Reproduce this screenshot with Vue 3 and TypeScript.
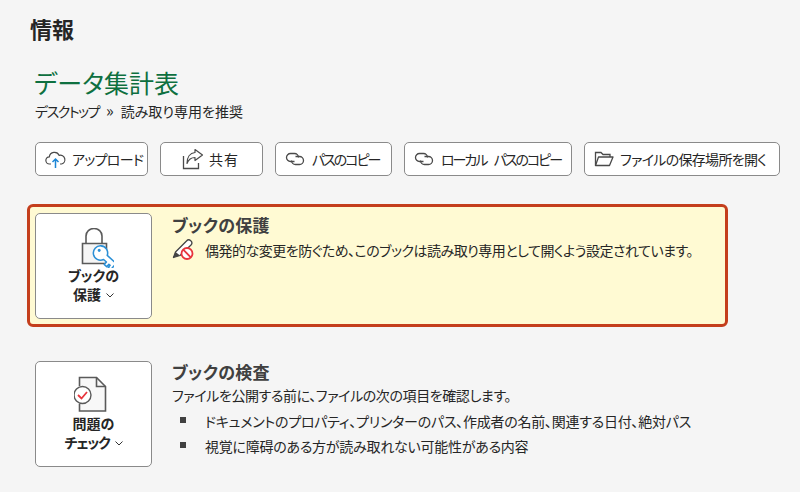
<script setup lang="ts">
interface Tool { label: string; icon: string; width: number }
const tools: Tool[] = [
  { label: 'アップロード', icon: 'cloud', width: 113 },
  { label: '共有', icon: 'share', width: 103 },
  { label: 'パスのコピー', icon: 'link', width: 117 },
  { label: 'ローカル パスのコピー', icon: 'link', width: 168 },
  { label: 'ファイルの保存場所を開く', icon: 'folder', width: 196 },
]
</script>

<template>
  <div class="page">
    <h1 class="heading">情報</h1>
    <div class="doc-title">データ集計表</div>
    <div class="crumb"><span class="crumb-kana">デスクトップ</span><span class="sep">»</span><span>読み取り専用を推奨</span></div>

    <div class="tools">
      <button v-for="t in tools" :key="t.label" class="tool" :class="'tool-' + t.icon" :style="{ width: t.width + 'px' }">
        <svg v-if="t.icon === 'cloud'" width="22" height="20" viewBox="0 0 22 20" fill="none">
          <path d="M6 15H4.600A3.600 3.600 0 0 1 4.300 7.800 5.200 5.200 0 0 1 14.200 6.400 4.400 4.400 0 0 1 16.600 15H15" stroke="#4a4a4a" stroke-width="1.200" />
          <path d="M10.500 19V10.500M7.500 13 10.500 10 13.500 13" stroke="#1c86d6" stroke-width="1.500" />
        </svg>
        <svg v-else-if="t.icon === 'share'" width="22" height="22" viewBox="0 0 22 22" fill="none">
          <path d="M1.500 8V20.500H16.500V15" stroke="#4a4a4a" stroke-width="1.300" />
          <path d="M13 1.500 20.500 7 13 12.500V9.500C9 9.500 6.500 11.500 5 15.500 5 9.500 8 5 13 4.500Z" stroke="#4a4a4a" stroke-width="1.200" stroke-linejoin="round" />
        </svg>
        <svg v-else-if="t.icon === 'link'" width="20" height="14" viewBox="0 0 20 14" fill="none">
          <path d="M9.500 9.500H5.500A4 4 0 0 1 5.500 1.500H9.500A4 4 0 0 1 13.500 5.500" stroke="#4a4a4a" stroke-width="1.300" />
          <path d="M10.500 4.500H14.500A4 4 0 0 1 14.500 12.500H10.500A4 4 0 0 1 6.500 8.500" stroke="#4a4a4a" stroke-width="1.300" />
        </svg>
        <svg v-else width="20" height="16" viewBox="0 0 20 16" fill="none">
          <path d="M1.500 14.500V1.500H7L9 3.500H16V6" stroke="#4a4a4a" stroke-width="1.300" />
          <path d="M1.500 14.500 4.500 6H19L15.500 14.500Z" stroke="#4a4a4a" stroke-width="1.300" stroke-linejoin="round" />
        </svg>
        <span>{{ t.label }}</span>
      </button>
    </div>

    <section class="banner">
      <button class="big-btn">
        <svg class="big-icon" width="40" height="40" viewBox="0 0 40 40" fill="none">
          <path d="M12 15V8A8 7.500 0 0 1 28 8V15" stroke="#5a5a5a" stroke-width="1.600" />
          <path d="M8.500 15.500H32.500V35.500H8.500Z" fill="#f5f5f5" stroke="#5a5a5a" stroke-width="1.600" />
          <g transform="translate(26.500 25) rotate(42) scale(1.100)">
            <path d="M6 -2.500A6.500 6.500 0 1 0 6 2.500H9.500V5.500H12.500V2.500H14V5H17V-2.500Z" fill="#fff" stroke="#2a8fd6" stroke-width="1.400" stroke-linejoin="round" />
            <circle cx="-2.500" cy="-1" r="1.400" fill="#2a8fd6" />
          </g>
        </svg>
        <span class="big-label">ブックの<br />保護 <svg class="chev" width="8" height="5" viewBox="0 0 8 5" fill="none"><path d="M.5.500 4 4 7.500.500" stroke="#333" /></svg></span>
      </button>
      <div class="body">
        <h2>ブックの保護</h2>
        <div class="warn">
          <svg width="22" height="22" viewBox="0 0 22 22" fill="none">
            <path d="M1.500 18.500 3.500 13 14.500 2A2.500 2.500 0 0 1 19 6L8 16.500Z" fill="#fff" stroke="#444" stroke-width="1.300" stroke-linejoin="round" />
            <path d="M1.500 18.500 3.500 13 8 16.500Z" fill="#444" />
            <circle cx="15" cy="14.500" r="5.500" fill="#fff" stroke="#e8343c" stroke-width="1.800" />
            <path d="M11.200 10.700 18.800 18.300" stroke="#e8343c" stroke-width="1.800" />
          </svg>
          <p>偶発的な変更を防ぐため、このブックは読み取り専用として開くよう設定されています。</p>
        </div>
      </div>
    </section>

    <section class="inspect">
      <button class="big-btn">
        <svg class="big-icon" width="40" height="40" viewBox="0 0 40 40" fill="none">
          <path d="M5.500 10V1.500H22.500L31.500 10.500V35H5.500V28" fill="#f8f8f8" stroke="#5a5a5a" stroke-width="1.600" />
          <path d="M22.500 1.500V10.500H31.500" stroke="#5a5a5a" stroke-width="1.600" />
          <circle cx="8.500" cy="19" r="8.500" fill="#fff" stroke="#5a5a5a" stroke-width="1.400" />
          <path d="M4 19 7.500 22.500 13 16" stroke="#e8343c" stroke-width="1.800" />
        </svg>
        <span class="big-label">問題の<br /><span class="tight">チェック</span> <svg class="chev" width="8" height="5" viewBox="0 0 8 5" fill="none"><path d="M.5.500 4 4 7.500.500" stroke="#333" /></svg></span>
      </button>
      <div class="body">
        <h2>ブックの検査</h2>
        <p class="intro">ファイルを公開する前に、ファイルの次の項目を確認します。</p>
        <ul>
          <li>ドキュメントのプロパティ、プリンターのパス、作成者の名前、関連する日付、絶対パス</li>
          <li>視覚に障碍のある方が読み取れない可能性がある内容</li>
        </ul>
      </div>
    </section>
  </div>
</template>

<style>
html, body { margin: 0; background: #f5f5f5; }
</style>

<style scoped>
.page {
  width: 800px;
  height: 492px;
  box-sizing: border-box;
  overflow: hidden;
  padding: 15px 0 0 0;
  background: #f5f5f5;
  color: #262626;
  font-family: "Noto Sans CJK JP", "Noto Sans", sans-serif;
  font-feature-settings: "palt";
}
.heading {
  margin: 0 0 0 30px;
  font-size: 22px;
  line-height: 26px;
  font-weight: 700;
}
.doc-title {
  margin: 26px 0 0 34px;
  font-size: 25px;
  line-height: 30px;
  color: #0e7040;
  font-weight: 400;
}
.crumb {
  margin: 5px 0 0 35px;
  font-size: 14px;
  line-height: 18px;
  display: flex;
}
.crumb-kana { letter-spacing: -1.5px; }
.sep { margin: 0 7px 0 7px; font-size: 16px; line-height: 17px; }
.tools {
  display: flex;
  gap: 12px;
  margin: 22px 0 0 35px;
}
.tool {
  height: 34px;
  box-sizing: border-box;
  display: flex;
  align-items: center;
  justify-content: flex-start;
  padding: 0 0 0 9px;
  background: #fff;
  border: 1px solid #8a8a8a;
  border-radius: 5px;
  font-family: inherit;
  font-feature-settings: inherit;
  font-size: 14px;
  color: #262626;
  white-space: nowrap;
}
.tool-cloud { gap: 5px; letter-spacing: -0.7px; }
.tool-share { gap: 5px; padding-left: 21px; letter-spacing: 1px; }
.tool-link { gap: 7px; letter-spacing: -2px; word-spacing: 6px; }
.tool-folder { gap: 6px; letter-spacing: -0.7px; }
.banner {
  display: flex;
  margin: 28px 0 0 27px;
  width: 701px;
  height: 123px;
  box-sizing: border-box;
  border: 3px solid #c43e1c;
  border-radius: 6px;
  background: #fffad3;
  padding: 6px 0 0 5px;
}
.inspect {
  display: flex;
  margin: 34px 0 0 35px;
}
.big-btn {
  flex: none;
  width: 117px;
  height: 106px;
  box-sizing: border-box;
  padding: 14px 0 0;
  display: flex;
  flex-direction: column;
  align-items: center;
  background: #fff;
  border: 1px solid #8a8a8a;
  border-radius: 5px;
  font-family: inherit;
  font-feature-settings: inherit;
  color: #262626;
}
.big-label {
  margin-top: -2px;
  font-size: 14px;
  line-height: 19px;
  font-weight: 700;
}
.tight { letter-spacing: -1.2px; }
.chev { margin: 0 0 2px 2px; }
.body { margin-left: 20px; }
h2 {
  margin: 0;
  font-size: 17px;
  line-height: 24px;
  font-weight: 700;
  color: #404040;
  letter-spacing: 0.3px;
}
.inspect h2 { margin-top: -1px; }
.warn {
  display: flex;
  align-items: flex-start;
  gap: 11px;
  margin-top: 2px;
}
p { margin: 0; }
.warn p, .intro, li {
  font-size: 14px;
  line-height: 20px;
}
.warn p { margin-top: 1px; letter-spacing: -0.5px; }
.intro { margin-top: 1px; letter-spacing: -0.4px; }
ul {
  list-style: none;
  margin: 6px 0 0;
  padding: 0;
}
li {
  position: relative;
  padding-left: 33px;
  margin-bottom: 5px;
  letter-spacing: -0.25px;
}
li::before {
  content: "";
  position: absolute;
  left: 8px;
  top: 6px;
  width: 6px;
  height: 6px;
  background: #404040;
}
</style>
